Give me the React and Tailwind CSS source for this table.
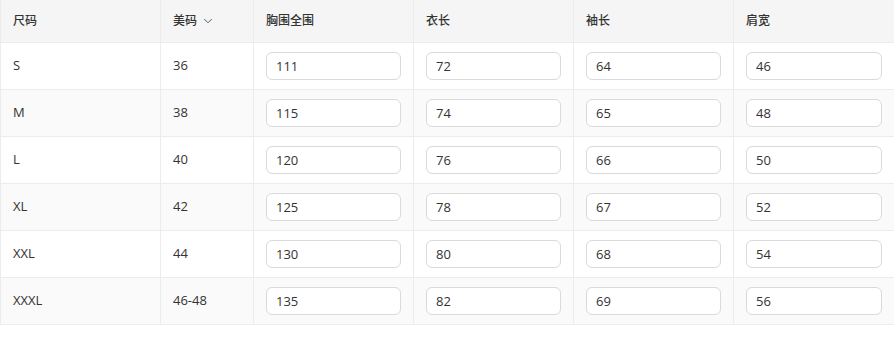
import React from 'react';
import { ChevronDown } from 'lucide-react';

const rows = [
  { size: 'S', us: '36', chest: '111', length: '72', sleeve: '64', shoulder: '46' },
  { size: 'M', us: '38', chest: '115', length: '74', sleeve: '65', shoulder: '48' },
  { size: 'L', us: '40', chest: '120', length: '76', sleeve: '66', shoulder: '50' },
  { size: 'XL', us: '42', chest: '125', length: '78', sleeve: '67', shoulder: '52' },
  { size: 'XXL', us: '44', chest: '130', length: '80', sleeve: '68', shoulder: '54' },
  { size: 'XXXL', us: '46-48', chest: '135', length: '82', sleeve: '69', shoulder: '56' },
];

const Cell = ({ children, className = '' }) => (
  <td className={`border border-[#ececec] px-3 align-middle ${className}`}>{children}</td>
);

const Field = ({ value }) => (
  <input
    defaultValue={value}
    className="w-full h-[28px] rounded-md border border-[#dadada] bg-white px-[9px] text-[13px] text-[#333] outline-none"
  />
);

const App = () => {
  return (
    <div
      className="w-[894px] h-[343px] bg-white text-[#333] text-[13px] overflow-hidden"
      style={{ fontFamily: '"Open Sans", "Noto Sans CJK SC", sans-serif' }}
    >
      <table className="border-collapse table-fixed w-[894px] -mt-px">
        <colgroup>
          <col className="w-[160px]" />
          <col className="w-[93px]" />
          <col className="w-[160px]" />
          <col className="w-[160px]" />
          <col className="w-[160px]" />
          <col className="w-[161px]" />
        </colgroup>
        <thead>
          <tr className="h-[43px] bg-[#f5f5f5] text-[12px] font-medium text-[#333]">
            <Cell className="text-left">尺码</Cell>
            <Cell>
              <span className="flex items-center gap-1">
                美码 <ChevronDown className="w-3.5 h-3.5 text-[#444]" strokeWidth={1.5} />
              </span>
            </Cell>
            <Cell>胸围全围</Cell>
            <Cell>衣长</Cell>
            <Cell>袖长</Cell>
            <Cell>肩宽</Cell>
          </tr>
        </thead>
        <tbody>
          {rows.map((r, i) => (
            <tr key={r.size} className={`h-[47px] ${i % 2 === 1 ? 'bg-[#fafafa]' : 'bg-white'}`}>
              <Cell>{r.size}</Cell>
              <Cell>{r.us}</Cell>
              <Cell><Field value={r.chest} /></Cell>
              <Cell><Field value={r.length} /></Cell>
              <Cell><Field value={r.sleeve} /></Cell>
              <Cell><Field value={r.shoulder} /></Cell>
            </tr>
          ))}
        </tbody>
      </table>
    </div>
  );
};

export default App;
